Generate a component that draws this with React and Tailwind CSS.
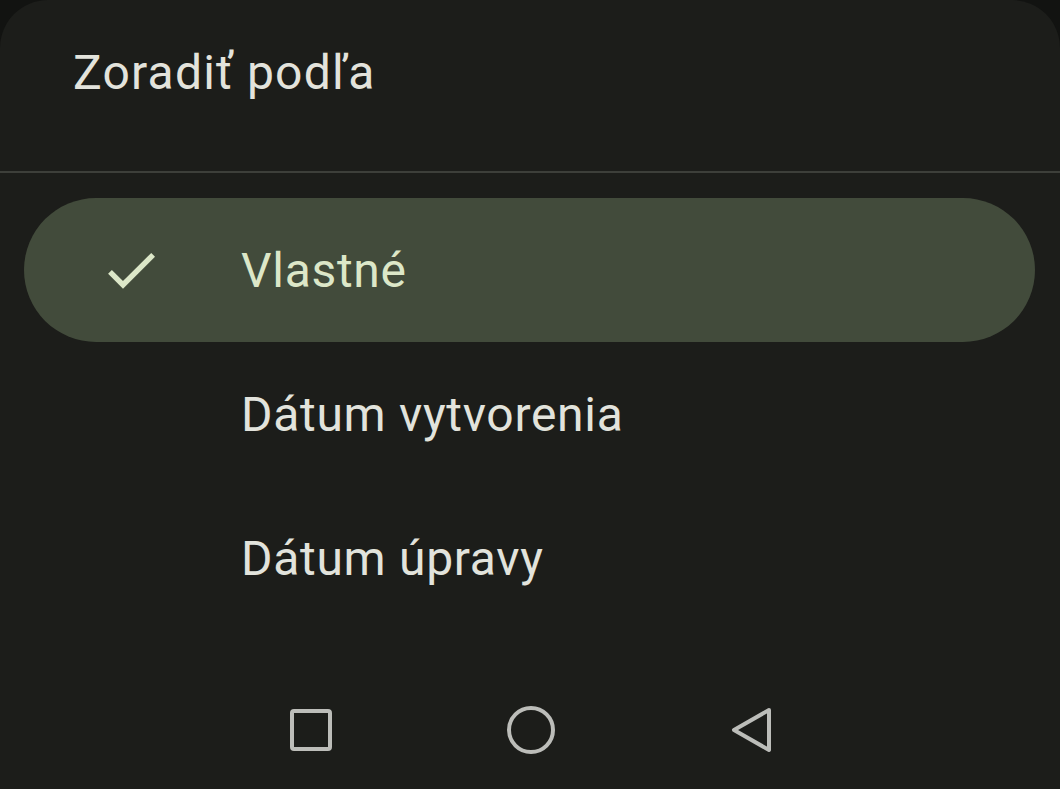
import React, { useState } from "react";

const options = ["Vlastné", "Dátum vytvorenia", "Dátum úpravy"];

const CheckIcon = ({ className }) => (
  <svg viewBox="0 0 24 24" className={className} fill="currentColor">
    <path d="M9 16.17L4.83 12l-1.42 1.41L9 19 21 7l-1.41-1.41z" />
  </svg>
);

const SortSheet = () => {
  const [selected, setSelected] = useState(0);

  return (
    <div className="bg-[#1c1d1a] rounded-t-[48px] flex flex-col h-full">
      {/* header */}
      <div className="h-[171px] flex items-center pl-[73px] pb-[26px]">
        <h1 className="text-[48px] leading-none text-[#e3e3dc] tracking-[1.2px]">
          Zoradiť podľa
        </h1>
      </div>
      <div className="h-[2px] bg-[#3d3f3a]" />

      {/* options */}
      <div className="flex flex-col mt-[25px] mx-[24px] mr-[25px]">
        {options.map((label, index) => {
          const active = index === selected;
          return (
            <button
              key={label}
              onClick={() => setSelected(index)}
              className={`h-[144px] rounded-full flex items-center text-left ${
                active ? "bg-[#424b3b] text-[#dce7c8]" : "text-[#e2e3dc]"
              }`}
            >
              <div className="w-[217px] pl-[75px] flex items-center">
                {active && <CheckIcon className="w-[64px] h-[64px]" />}
              </div>
              <span className="text-[48px] leading-none tracking-[0.7px] pt-[2px]">
                {label}
              </span>
            </button>
          );
        })}
      </div>

      {/* nav bar */}
      <div className="flex-1 flex items-center justify-center gap-[175px] pt-[40px] pl-[4px]">
        <div className="w-[42px] h-[42px] border-[4px] border-[#bcbdb9] rounded-[4px]" />
        <div className="w-[48px] h-[48px] border-[4px] border-[#bcbdb9] rounded-full" />
        <svg viewBox="0 0 44 48" className="w-[44px] h-[48px]" fill="none">
          <path
            d="M39 4 L4 24 L39 44 Z"
            stroke="#bcbdb9"
            strokeWidth="4"
            strokeLinejoin="round"
          />
        </svg>
      </div>
    </div>
  );
};

export default function App() {
  return (
    <div
      className="w-[1060px] h-[789px] bg-[#121311] overflow-hidden"
      style={{ fontFamily: "Roboto, 'Noto Sans', sans-serif" }}
    >
      <SortSheet />
    </div>
  );
}
